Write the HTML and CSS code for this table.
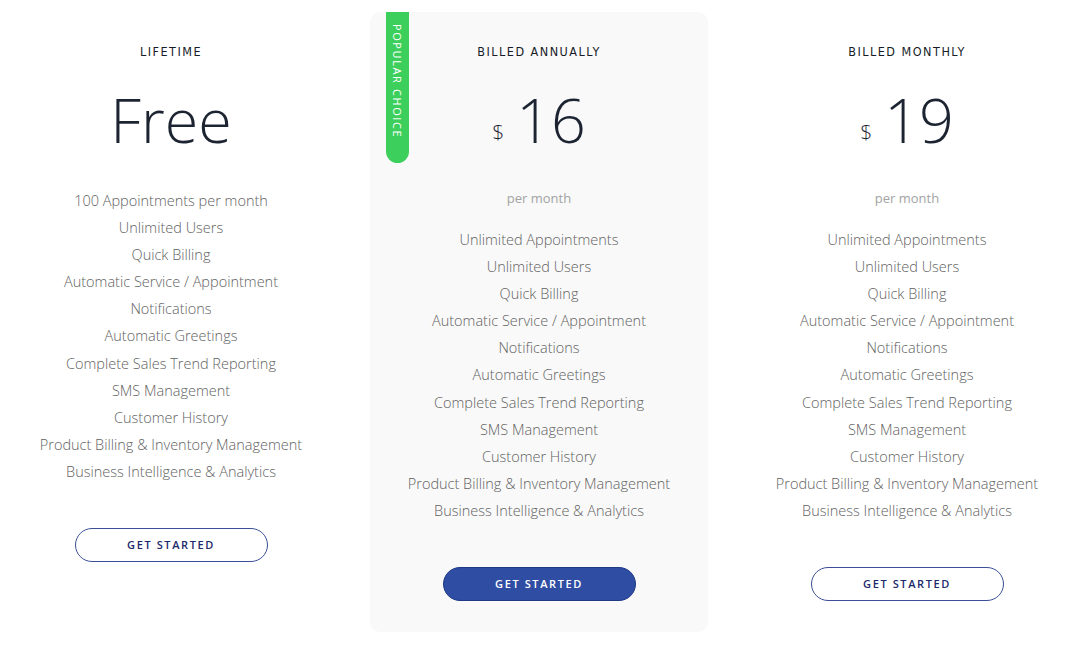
FILE: index.html
```html
<!DOCTYPE html>
<html lang="en">
<head>
  <meta charset="UTF-8">
  <meta name="viewport" content="width=device-width, initial-scale=1.0">
  <title>Pricing</title>
  <link rel="stylesheet" href="styles.css">
</head>
<body>
  <div class="pricing">
    <div class="plan">
      <h3 class="plan-title">LIFETIME</h3>
      <div class="price"><span class="amount">Free</span></div>
      <ul class="features first">
        <li>100 Appointments per month</li>
        <li>Unlimited Users</li>
        <li>Quick Billing</li>
        <li>Automatic Service / Appointment</li>
        <li>Notifications</li>
        <li>Automatic Greetings</li>
        <li>Complete Sales Trend Reporting</li>
        <li>SMS Management</li>
        <li>Customer History</li>
        <li>Product Billing &amp; Inventory Management</li>
        <li>Business Intelligence &amp; Analytics</li>
      </ul>
      <a class="btn" href="#">GET STARTED</a>
    </div>

    <div class="plan featured">
      <span class="badge">POPULAR CHOICE</span>
      <h3 class="plan-title">BILLED ANNUALLY</h3>
      <div class="price"><span class="currency">$</span><span class="amount">16</span></div>
      <p class="period">per month</p>
      <ul class="features">
        <li>Unlimited Appointments</li>
        <li>Unlimited Users</li>
        <li>Quick Billing</li>
        <li>Automatic Service / Appointment</li>
        <li>Notifications</li>
        <li>Automatic Greetings</li>
        <li>Complete Sales Trend Reporting</li>
        <li>SMS Management</li>
        <li>Customer History</li>
        <li>Product Billing &amp; Inventory Management</li>
        <li>Business Intelligence &amp; Analytics</li>
      </ul>
      <a class="btn btn-solid" href="#">GET STARTED</a>
    </div>

    <div class="plan">
      <h3 class="plan-title">BILLED MONTHLY</h3>
      <div class="price"><span class="currency">$</span><span class="amount">19</span></div>
      <p class="period">per month</p>
      <ul class="features">
        <li>Unlimited Appointments</li>
        <li>Unlimited Users</li>
        <li>Quick Billing</li>
        <li>Automatic Service / Appointment</li>
        <li>Notifications</li>
        <li>Automatic Greetings</li>
        <li>Complete Sales Trend Reporting</li>
        <li>SMS Management</li>
        <li>Customer History</li>
        <li>Product Billing &amp; Inventory Management</li>
        <li>Business Intelligence &amp; Analytics</li>
      </ul>
      <a class="btn" href="#">GET STARTED</a>
    </div>
  </div>
</body>
</html>
```

FILE: styles.css
```css
body {
  margin: 0;
  background-color: #fff;
  font-family: 'Open Sans', sans-serif;
  overflow: hidden;
}
.pricing {
  display: flex;
  align-items: flex-start;
  gap: 30px;
  padding: 12px 0 0 2px;
}
.plan {
  position: relative;
  flex: 0 0 338px;
  display: flex;
  flex-direction: column;
  align-items: center;
  padding: 32px 0 31px;
  border-radius: 10px;
}
.plan.featured {
  background-color: #f9f9f9;
}
.badge {
  position: absolute;
  top: 0;
  left: 16px;
  width: 23px;
  height: 151px;
  box-sizing: border-box;
  padding-top: 12px;
  background-color: #3ccf5b;
  border-radius: 0 0 12px 12px;
  color: #fff;
  font-size: 11px;
  letter-spacing: 1.6px;
  writing-mode: vertical-rl;
  line-height: 23px;
}
.plan-title {
  margin: 0;
  font-family: 'DejaVu Sans Condensed', 'DejaVu Sans', sans-serif;
  font-weight: normal;
  font-size: 12.5px;
  line-height: 16px;
  letter-spacing: 1.5px;
  color: #161c28;
}
.price {
  display: flex;
  align-items: baseline;
  margin-top: 27px;
  height: 66px;
  color: #1c2331;
}
.amount {
  font-size: 61px;
  font-weight: 300;
  line-height: 66px;
}
.currency {
  font-size: 21px;
  font-weight: 300;
  margin-right: 12px;
  position: relative;
  top: -3px;
}
.period {
  margin: 35px 0 0;
  font-size: 13px;
  line-height: 20px;
  color: #a3a3a3;
}
.features {
  list-style: none;
  margin: 18px 0 0;
  padding: 0;
  text-align: center;
}
.features.first {
  margin-top: 34px;
}
.features li {
  font-size: 14.5px;
  font-weight: 300;
  line-height: 27.1px;
  color: #626262;
}
.btn {
  display: block;
  box-sizing: border-box;
  width: 193px;
  height: 34px;
  margin-top: 43px;
  border: 1.5px solid #3b4f96;
  border-radius: 17px;
  color: #1b2a6b;
  font-size: 11px;
  font-weight: 600;
  letter-spacing: 1.6px;
  line-height: 31px;
  text-align: center;
  text-decoration: none;
}
.btn-solid {
  background-color: #2f4ea3;
  border-color: #1f3987;
  color: #fff;
}
```
